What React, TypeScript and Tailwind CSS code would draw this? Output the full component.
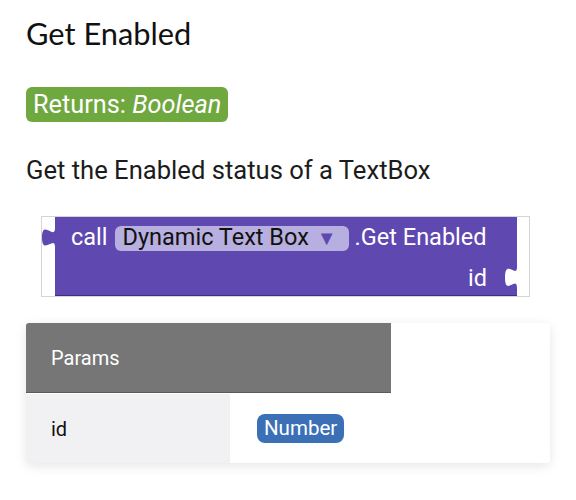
import React from "react";

export default function App() {
  return (
    <div className="w-[576px] h-[500px] bg-white pl-[26px] pt-[16px]" style={{ fontFamily: "Roboto, 'Liberation Sans', sans-serif" }}>
      <h1 className="text-[30.8px] leading-[36px] font-normal text-[#111]" style={{ fontFamily: "Lato, 'Open Sans', sans-serif" }}>
        Get Enabled
      </h1>
      <div className="mt-[35px] flex">
        <span className="bg-[#70a840] text-white text-[25.3px] leading-[35px] px-[7px] rounded-[6px]">
          Returns: <i>Boolean</i>
        </span>
      </div>
      <p className="mt-[33px] text-[25.6px] leading-[30px] text-[#1c1c1c]">Get the Enabled status of a TextBox</p>

      <div className="relative ml-[15px] mt-[31px] w-[489px] h-[81px] border border-[#d4d4d4]">
        <svg className="absolute inset-0" width="487" height="79" viewBox="0 0 487 79">
          <path
            d="M13,0 H475 V50 c 0,12 -12,-9 -12,10.5 s 12,-3 12,10.5 V79 H13 V30 c 0,-12 -13,9 -13,-9.5 s 13,3 13,-9.5 Z"
            fill="#5f48b0"
          />
          <line x1="13" y1="78.5" x2="475" y2="78.5" stroke="#3e2f7a" strokeWidth="1" />
        </svg>
        <div className="relative flex flex-col h-full text-white text-[23.5px]">
          <div className="flex items-center h-[41px] pl-[29px] pt-[1px]">
            <span>call</span>
            <span className="ml-[7px] flex items-center h-[25px] bg-[#b7afdf] text-[#111] rounded-[6px] pl-[8px] pr-[12px]">
              Dynamic Text Box
              <span className="ml-[8px] text-[#5f48b0] text-[20px] leading-none">▼</span>
            </span>
            <span className="ml-[6px]">.Get Enabled</span>
          </div>
          <div className="flex items-center justify-end h-[34px] pt-[7px] pr-[42px]">
            <span>id</span>
          </div>
        </div>
      </div>

      <div className="mt-[26px] w-[524px] bg-white rounded-[3px] shadow-[0_3px_12px_rgba(0,0,0,0.10)] overflow-hidden">
        <div className="flex">
          <div className="w-[365px] h-[70px] bg-[#767676] border-b border-[#5a5a5a] flex items-center pl-[25px] text-white text-[20px]">
            Params
          </div>
        </div>
        <div className="flex h-[70px] border-t border-white">
          <div className="w-[204px] bg-[#f1f1f3] flex items-center pl-[25px] text-[20px] text-[#111]">id</div>
          <div className="flex-1 flex items-center pl-[27px]">
            <span className="bg-[#3b70b7] text-white text-[20.5px] leading-[29px] px-[7px] rounded-[8px]">Number</span>
          </div>
        </div>
      </div>
    </div>
  );
}
